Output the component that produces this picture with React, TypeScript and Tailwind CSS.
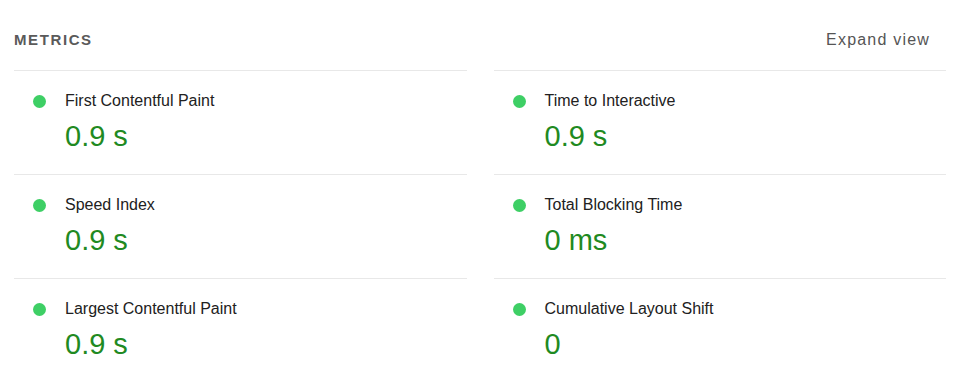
const metrics = [
  { label: "First Contentful Paint", value: "0.9 s" },
  { label: "Time to Interactive", value: "0.9 s" },
  { label: "Speed Index", value: "0.9 s" },
  { label: "Total Blocking Time", value: "0 ms" },
  { label: "Largest Contentful Paint", value: "0.9 s" },
  { label: "Cumulative Layout Shift", value: "0" },
];

const App = () => {
  return (
    <div
      className="w-[960px] h-[380px] bg-white px-[14px] overflow-hidden"
      style={{ fontFamily: '"Liberation Sans", Arial, sans-serif' }}
    >
      {/* Header */}
      <div className="flex items-center justify-between h-[70px] pt-[10px]">
        <div className="text-[15px] font-semibold tracking-[1.6px] text-[#5a5a5a] leading-5">
          METRICS
        </div>
        <div className="text-[16px] tracking-[1.2px] text-[#555555] leading-5 mr-[16px]">
          Expand view
        </div>
      </div>

      {/* Metric grid */}
      <div className="grid grid-cols-2 gap-x-[27px]">
        {metrics.map((m) => (
          <div key={m.label} className="border-t border-[#e8e8e8] pt-[20px] pb-[21px]">
            <div className="flex items-center">
              <span className="w-[13px] h-[13px] rounded-full bg-[#3ecf65] ml-[19px] mr-[19px]" />
              <span className="text-[16px] leading-5 text-[#212121]">{m.label}</span>
            </div>
            <div className="mt-[8px] ml-[51px] text-[29px] leading-[34px] text-[#1f8a22]">
              {m.value}
            </div>
          </div>
        ))}
      </div>
    </div>
  );
};

export default App;
